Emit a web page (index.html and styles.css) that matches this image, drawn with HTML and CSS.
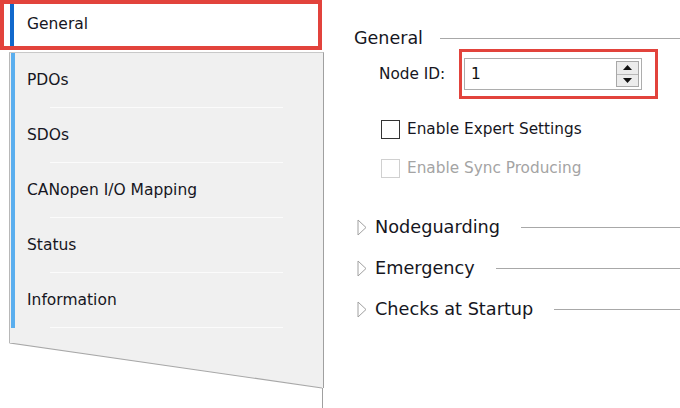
FILE: index.html
```html
<!DOCTYPE html>
<html lang="en">
<head>
<meta charset="UTF-8" />
<meta name="viewport" content="width=device-width, initial-scale=1" />
<title>Device Settings</title>
<link rel="stylesheet" href="styles.css">
</head>
<body>

<div class="page">

  <!-- Left tab list -->
  <nav class="tabs">
    <div class="tab-active">
      <span class="tab-active-inner">General</span>
    </div>
    <div class="tab-panel">
      <div class="tab">PDOs</div>
      <div class="tab">SDOs</div>
      <div class="tab">CANopen I/O Mapping</div>
      <div class="tab">Status</div>
      <div class="tab">Information</div>
    </div>
    <svg class="tab-foot" width="324" height="65" viewBox="0 0 324 65">
      <polygon points="9,0 323,0 323,45" fill="#f0f0f0"/>
      <line x1="9.5" y1="0" x2="322" y2="45" stroke="#a8a8a8" stroke-width="1.2"/>
      <line x1="323.5" y1="0" x2="323.5" y2="45" stroke="#a0a0a0"/>
      <line x1="322.5" y1="45" x2="322.5" y2="65" stroke="#a0a0a0"/>
    </svg>
  </nav>

  <!-- Settings -->
  <main class="settings">
    <div class="group-head">
      <span>General</span>
      <span class="rule"></span>
    </div>

    <div class="node-row">
      <span class="node-label">Node ID:</span>
      <span class="highlight">
        <span class="spin">
          <span class="spin-value">1</span>
          <span class="spin-buttons">
            <span class="spin-btn">
              <svg width="9" height="5" viewBox="0 0 9 5"><polygon points="0,5 9,5 4.5,0" fill="#111"/></svg>
            </span>
            <span class="spin-btn">
              <svg width="9" height="5" viewBox="0 0 9 5"><polygon points="0,0 9,0 4.5,5" fill="#111"/></svg>
            </span>
          </span>
        </span>
      </span>
    </div>

    <label class="check">
      <span class="box"></span>
      Enable Expert Settings
    </label>
    <label class="check check-disabled">
      <span class="box"></span>
      Enable Sync Producing
    </label>

    <div class="section first">
      <svg class="arrow" width="10" height="17" viewBox="0 0 10 17"><polygon points="1,1 9,8.5 1,16" fill="none" stroke="#a0a0a0"/></svg>
      <span>Nodeguarding</span>
      <span class="rule"></span>
    </div>
    <div class="section">
      <svg class="arrow" width="10" height="17" viewBox="0 0 10 17"><polygon points="1,1 9,8.5 1,16" fill="none" stroke="#a0a0a0"/></svg>
      <span>Emergency</span>
      <span class="rule"></span>
    </div>
    <div class="section">
      <svg class="arrow" width="10" height="17" viewBox="0 0 10 17"><polygon points="1,1 9,8.5 1,16" fill="none" stroke="#a0a0a0"/></svg>
      <span>Checks at Startup</span>
      <span class="rule"></span>
    </div>
  </main>

</div>

</body>
</html>
```

FILE: styles.css
```css
/* General layout */
body {
  margin: 0;
  background: #ffffff;
  font-family: 'DejaVu Sans', Verdana, sans-serif;
  color: #161622;
}

.page {
  display: flex;
  width: 680px;
  height: 408px;
  overflow: hidden;
}

/* Tabs on the left */
.tabs {
  width: 324px;
  flex-shrink: 0;
  display: flex;
  flex-direction: column;
}

.tab-active {
  width: 322px;
  height: 50px;
  box-sizing: border-box;
  border: 4px solid #e2433c;
  background: #ffffff;
  padding-left: 6px;
  display: flex;
}
.tab-active-inner {
  flex: 1;
  border-left: 4px solid #1168cc;
  padding-left: 13px;
  font-size: 15.5px;
  line-height: 40px;
}

.tab-panel {
  margin: 2px 0 0 9px;
  width: 315px;
  box-sizing: border-box;
  background: #f0f0f0;
  border-left: 1px solid #b8b8b8;
  border-right: 1px solid #a0a0a0;
  border-top: 1px solid #c8c8c8;
  padding: 0 0 15px 1px;
}

.tab {
  border-left: 4px solid #5aaeee;
  padding-left: 12px;
  font-size: 15.5px;
  line-height: 54px;
  height: 55px;
  box-sizing: border-box;
}
.tab::after {
  content: "";
  display: block;
  margin-left: 23px;
  width: 233px;
  height: 1px;
  background: #fbfbfb;
}

.tab-foot {
  display: block;
}

/* Settings on the right */
.settings {
  flex: 1;
  padding-left: 30px;
  display: flex;
  flex-direction: column;
}

.group-head {
  margin-top: 28px;
  height: 20px;
  display: flex;
  align-items: center;
  font-size: 17.5px;
}
.rule {
  flex: 1;
  height: 1px;
  background: #a8a8a8;
  margin-left: 17px;
}

.node-row {
  margin: 1px 0 0 25px;
  display: flex;
  align-items: center;
  font-size: 15.3px;
}
.node-label {
  width: 80px;
}
.highlight {
  border: 3px solid #e2433c;
  padding: 6px 13px 6px 2px;
}
.spin {
  width: 178px;
  height: 32px;
  box-sizing: border-box;
  border: 1px solid #adadad;
  display: flex;
  align-items: center;
  justify-content: space-between;
  padding: 0 2px 0 6px;
}
.spin-value {
  font-size: 15.3px;
  color: #111;
}
.spin-buttons {
  display: flex;
  flex-direction: column;
  width: 23px;
  height: 26px;
  border: 1px solid #a8a8a8;
  box-sizing: border-box;
}
.spin-btn {
  flex: 1;
  background: #ececec;
  display: flex;
  align-items: center;
  justify-content: center;
}
.spin-btn + .spin-btn {
  border-top: 1px solid #b8b8b8;
}
.spin-btn svg {
  display: block;
}

.check {
  margin: 20px 0 0 27px;
  height: 20px;
  display: flex;
  align-items: center;
  gap: 7px;
  font-size: 15.3px;
}
.check .box {
  width: 19px;
  height: 19px;
  box-sizing: border-box;
  border: 1px solid #333333;
  background: #ffffff;
}
.check-disabled {
  margin-top: 19px;
  color: #a4a4a4;
}
.check-disabled .box {
  border-color: #d0d0d0;
}

.section {
  margin: 17px 0 0 3px;
  height: 24px;
  display: flex;
  align-items: center;
  font-size: 17.7px;
}
.section.first {
  margin-top: 37px;
}
.section .arrow {
  margin-right: 8px;
}
.section .rule {
  margin-left: 21px;
}
```
